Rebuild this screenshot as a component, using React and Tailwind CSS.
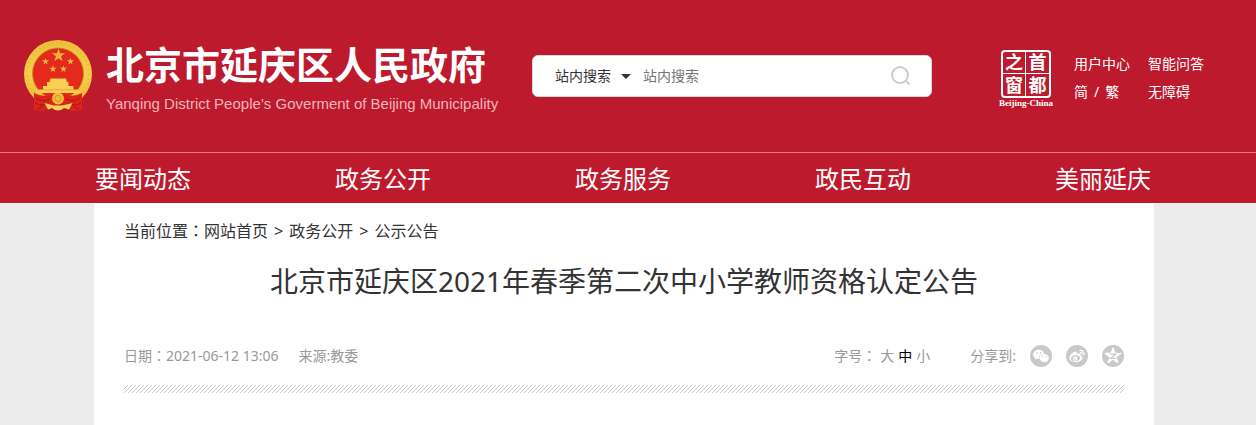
import { Fragment, useState } from 'react';
import { AiFillWechat, AiOutlineWeibo } from 'react-icons/ai';

const NAV_ITEMS = ['要闻动态', '政务公开', '政务服务', '政民互动', '美丽延庆'];

const BREADCRUMBS = ['网站首页', '政务公开', '公示公告'];

const FONT_SIZES = ['大', '中', '小'];

const STAR = 'M0 -10 L2.25 -3.1 L9.5 -3.1 L3.64 1.2 L5.9 8.1 L0 3.8 L-5.9 8.1 L-3.64 1.2 L-9.5 -3.1 L-2.25 -3.1 Z';

const Emblem = () => (
    <svg viewBox="0 0 68 72" className="h-18 w-17 shrink-0" aria-hidden="true">
        <defs>
            <linearGradient id="gold" x1="0" y1="0" x2="0" y2="1">
                <stop offset="0" stopColor="#ecc03a" />
                <stop offset="0.5" stopColor="#f5cf48" />
                <stop offset="1" stopColor="#eeb534" />
            </linearGradient>
        </defs>
        <circle cx="34" cy="34" r="34" fill="url(#gold)" />
        <circle cx="34" cy="34" r="31" fill="none" stroke="#d9991f" strokeWidth="2.5" strokeDasharray="1.5 3" opacity="0.25" />
        <circle cx="34" cy="33.5" r="25.5" fill="#e32a1c" stroke="#c98a1c" strokeWidth="0.8" />
        <g fill="#ecb63c">
            <path d={STAR} transform="translate(34.5 15.5) scale(0.7)" />
            <path d={STAR} transform="translate(21.5 21.5) scale(0.38)" />
            <path d={STAR} transform="translate(46.5 21.5) scale(0.38)" />
            <path d={STAR} transform="translate(29 29) scale(0.38)" />
            <path d={STAR} transform="translate(39.5 29) scale(0.38)" />
        </g>
        <g fill="#f9d052">
            <path d="M26.5 38.5 h15.5 l1 3.8 h-17.5 z" />
            <path d="M23 42 h21.5 v4.5 h-21.5 z" />
            <path d="M19 46 h30.5 v4 h-30.5 z" />
            <path d="M12 49.5 h44.5 l-1 3.5 h-42.5 z" />
        </g>
        <path d="M13 49.8 h43" stroke="#dd8a28" strokeWidth="0.6" />
        <path d="M10 53 Q17 57 25 55 L34 54 L43 55 Q51 57 58 53 L58 70 L47 71 L43 66 H25 L21 71 L10 70 Z" fill="#dd2418" />
        <path d="M12 58 q7 5 14 1 M11 63 q7 4 12 0 M13 69 q5 -1 7 -5 M56 58 q-7 5 -14 1 M57 63 q-7 4 -12 0 M55 69 q-5 -1 -7 -5" fill="none" stroke="#a81713" strokeWidth="1" />
        <circle cx="34" cy="58.5" r="6" fill="#f0bd3d" />
        <circle cx="34" cy="58.5" r="3" fill="none" stroke="#dc9226" strokeWidth="1" />
        <path d="M20.5 63 L30 65.5 H38 L48.5 63 L45 69.5 L40 68 Q34 73 28 68 L24 69.5 Z" fill="#f6cf56" />
    </svg>
);

const CapitalWindowLogo = () => (
    <a href="#capital" className="flex w-14 flex-col items-center text-white">
        <span className="grid h-12 w-[50px] grid-cols-2 rounded-sm border-2 border-white text-lg leading-5 font-bold">
            <span className="flex items-center justify-center border-r border-b border-white">之</span>
            <span className="flex items-center justify-center border-b border-white">首</span>
            <span className="flex items-center justify-center border-r border-white">窗</span>
            <span className="flex items-center justify-center">都</span>
        </span>
        <span className="pt-px font-['Liberation_Serif',serif] text-[9px] leading-2 font-bold whitespace-nowrap">Beijing-China</span>
    </a>
);

const QzoneIcon = () => (
    <svg viewBox="-11 -11 22 22" className="size-[18px]" aria-hidden="true">
        <path d={STAR} fill="currentColor" stroke="currentColor" strokeWidth="1.5" strokeLinejoin="round" />
        <path d="M-3.5 -2.2 H3 L-3 3 H3.6" fill="none" stroke="#c9c9c9" strokeWidth="1.6" />
    </svg>
);

// the SC glyph hugs the left edge, the TC one is centred in its box
const Colon = () => <span className="font-['Noto_Sans_CJK_TC',sans-serif] leading-none">：</span>;

const SHARE_LINKS = [
    { label: '微信', icon: <AiFillWechat className="size-[18px]" /> },
    { label: '微博', icon: <AiOutlineWeibo className="size-[18px]" /> },
    { label: 'QQ空间', icon: <QzoneIcon /> },
];

const SearchBar = () => {
    const [keyword, setKeyword] = useState('');

    return (
        <form
            role="search"
            onSubmit={(e) => e.preventDefault()}
            className="flex h-[42px] w-[400px] items-center rounded-md border border-gray-300 bg-white pr-5 pl-[22px] text-sm text-[#333]"
        >
            <div className="relative">
                <select aria-label="搜索范围" className="w-20 appearance-none bg-transparent">
                    <option>站内搜索</option>
                </select>
                <svg viewBox="0 0 10 5" className="pointer-events-none absolute top-2 right-1 h-[5px] w-[10px]" aria-hidden="true">
                    <path d="M0 0 H10 L5 5 Z" fill="#333" />
                </svg>
            </div>
            <input
                type="text"
                aria-label="站内搜索"
                placeholder="站内搜索"
                value={keyword}
                onChange={(e) => setKeyword(e.target.value)}
                className="ml-2 min-w-0 flex-1 outline-none placeholder:text-[#757575]"
            />
            <button type="submit" aria-label="搜索" className="text-[#ccc]">
                <svg viewBox="0 0 20 20" className="size-5" fill="none" stroke="currentColor" strokeWidth="2" aria-hidden="true">
                    <circle cx="9" cy="9" r="8" />
                    <path d="M14.5 14.5 L18.5 18.5" />
                </svg>
            </button>
        </form>
    );
};

const Header = () => (
    <header className="bg-[#bd1a2d] text-white">
        <div className="pr-2">
            <div className="mx-auto flex h-38 max-w-[1200px] items-center">
                <a href="#home" className="flex w-[508px] shrink-0 items-center gap-[14px]">
                    <Emblem />
                    <span className="pt-1">
                        <span className="block text-[38px] leading-12 font-bold whitespace-nowrap">北京市延庆区人民政府</span>
                        <span className="block pt-1 font-['Liberation_Sans',sans-serif] text-[15px] leading-6 whitespace-nowrap text-[#f0b4ba]">
                            Yanqing District People’s Goverment of Beijing Municipality
                        </span>
                    </span>
                </a>
                <SearchBar />
                <div className="ml-auto flex items-center gap-5 pt-1 pr-5">
                    <CapitalWindowLogo />
                    <ul className="grid grid-cols-2 gap-x-[18px] text-sm leading-7 whitespace-nowrap">
                        <li><a href="#user">用户中心</a></li>
                        <li><a href="#qa">智能问答</a></li>
                        <li><a href="#jian">简</a><span className="mx-1.5">/</span><a href="#fan">繁</a></li>
                        <li><a href="#accessible">无障碍</a></li>
                    </ul>
                </div>
            </div>
        </div>
        <nav className="border-t border-[#e37a86] pr-2">
            <ul className="mx-auto flex max-w-[1060px] justify-between pt-px pr-[3px] pl-px text-2xl leading-[49px]">
                {NAV_ITEMS.map((item) => (
                    <li key={item}><a href="#nav">{item}</a></li>
                ))}
            </ul>
        </nav>
    </header>
);

const App = () => {
    const [size, setSize] = useState('中');

    return (
        <div className="flex min-h-screen flex-col bg-[#ececec] font-['Noto_Sans','Noto_Sans_CJK_SC',sans-serif]">
            <Header />
            <div className="flex flex-1 pr-2">
                <main className="mx-auto w-full max-w-[1060px] bg-white px-[30px]">
                    <div className="pt-4 text-base leading-6 text-[#333]">
                        当前位置<Colon />
                        {BREADCRUMBS.map((crumb, i) => (
                            <Fragment key={crumb}>
                                {i > 0 && <span className="mx-1.5">&gt;</span>}
                                <a href="#crumb">{crumb}</a>
                            </Fragment>
                        ))}
                    </div>
                    <h1 className="pt-4 text-center text-[28px] leading-11 text-[#333]">
                        北京市延庆区2021年春季第二次中小学教师资格认定公告
                    </h1>
                    <div className="flex items-center justify-between pt-[41px] text-sm leading-6 text-[#999]">
                        <div className="flex gap-5">
                            <span>日期<Colon />2021-06-12 13:06</span>
                            <span>来源:教委</span>
                        </div>
                        <div className="flex items-center">
                            <span className="mr-1">字号<Colon /></span>
                            <div className="flex gap-1">
                                {FONT_SIZES.map((s) => (
                                    <button key={s} type="button" onClick={() => setSize(s)} className={s === size ? 'text-black' : ''}>
                                        {s}
                                    </button>
                                ))}
                            </div>
                            <span className="ml-10">分享到:</span>
                            <div className="ml-[14px] flex gap-[14px]">
                                {SHARE_LINKS.map(({ label, icon }) => (
                                    <a key={label} href="#share" aria-label={label} className="flex size-[22px] items-center justify-center rounded-full bg-[#c9c9c9] text-white">
                                        {icon}
                                    </a>
                                ))}
                            </div>
                        </div>
                    </div>
                    <div className="mt-[17px] h-2 bg-[linear-gradient(135deg,#fff_38%,#ccc_38%_62%,#fff_62%)] bg-size-[4px_4px]" />
                </main>
            </div>
        </div>
    );
};

export default App;
